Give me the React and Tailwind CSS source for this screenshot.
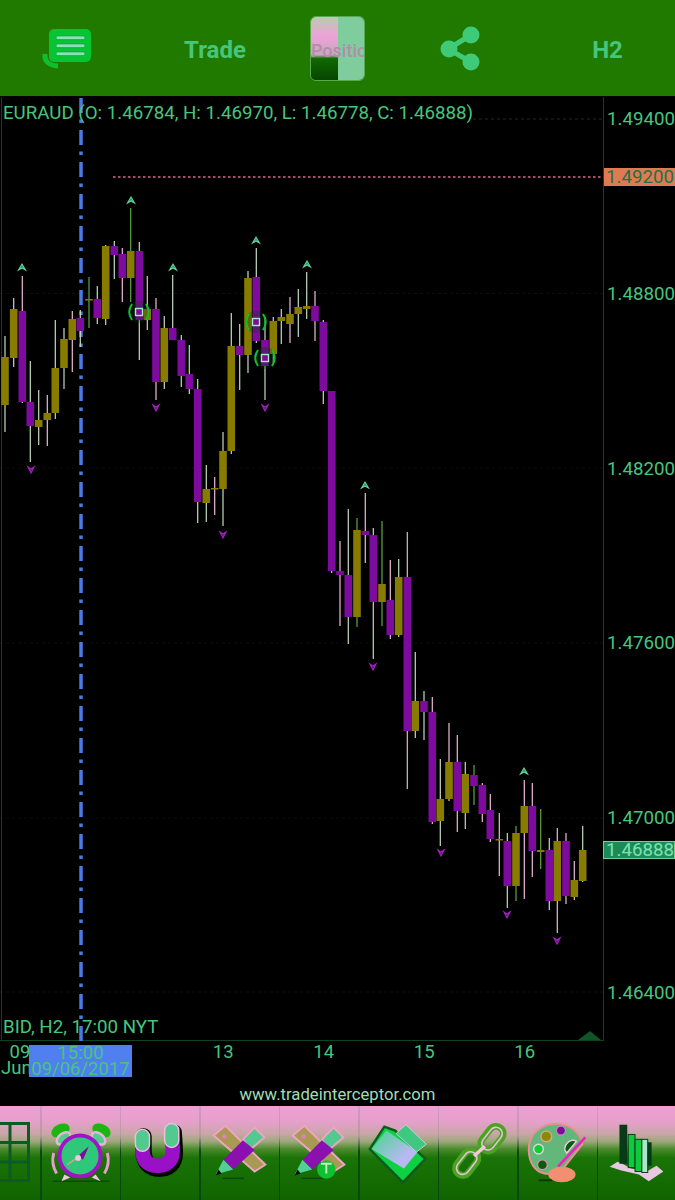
import React from "react";

// x, bodyTop, bodyBottom, wickTop, wickBottom, o=olive p=purple, optional wick colour
const PALE = "#c4dcc0";
const PINK = "#efbcd8";
const GRN = "#5fa83f";
const candles = [
  [5, 357, 405, 336, 432, "o"],
  [13.7, 309, 358, 298, 367, "o"],
  [22.3, 311, 402, 276, 403, "p", PINK],
  [30.3, 402, 426, 361, 462, "p"],
  [38.7, 420, 427, 390, 445, "o"],
  [47.3, 413, 420, 395, 446, "o", PINK],
  [55.3, 368, 413, 320, 419, "o"],
  [64, 339, 368, 328, 389, "o"],
  [72.3, 319, 340, 311, 372, "o", PINK],
  [80.3, 318, 331, 310, 347, "p"],
  [89, 299, 300.5, 277, 328, "o", GRN],
  [97.3, 299, 318, 286, 324, "p"],
  [105.7, 246, 319, 245, 325, "o", PINK],
  [114.3, 246, 255, 241, 279, "p"],
  [122.3, 254, 278, 248, 302, "p", PINK],
  [130.7, 251, 278, 208, 302, "o", GRN],
  [139.3, 251, 320, 242, 360, "p"],
  [147.3, 309, 320, 276, 330, "o", PINK],
  [156, 309, 382, 298, 400, "p", PINK],
  [164.3, 328, 382, 316, 389, "o"],
  [172.7, 328, 340, 275, 340, "p"],
  [181.3, 340, 376, 335, 387, "p"],
  [189.3, 374, 389, 345, 394, "p"],
  [197.7, 389, 502, 379, 523, "p"],
  [206.3, 489, 503, 465, 522, "o"],
  [214.7, 488, 489.5, 477, 515, "o", PINK],
  [223, 451, 489, 432, 526, "o"],
  [231.3, 346, 451, 313, 454, "o"],
  [239.7, 346, 355, 324, 390, "p"],
  [248, 278, 355, 271, 373, "o"],
  [256.3, 277, 341, 248, 343, "p"],
  [265, 340, 366, 317, 400, "p"],
  [273.3, 321, 354, 317, 363, "o"],
  [281.3, 317, 321, 309, 344, "o"],
  [290, 314, 324, 297, 343, "o", PINK],
  [298.3, 307, 314, 289, 337, "o"],
  [306.7, 306, 309, 272, 319, "o"],
  [315, 306, 321, 291, 341, "p", PINK],
  [323.3, 322, 391, 320, 404, "p"],
  [331.7, 391, 571, 391, 573, "p"],
  [340, 571, 575, 541, 626, "p", PINK],
  [348.3, 575, 617, 509, 644, "p"],
  [357, 530, 617, 518, 627, "o", GRN],
  [365.3, 531, 535, 493, 563, "p", PINK],
  [373.3, 535, 602, 528, 659, "p"],
  [382, 584, 602, 521, 626, "o", GRN],
  [390.3, 600, 635, 560, 639, "p", PINK],
  [398.7, 577, 635, 559, 637, "o"],
  [407.3, 577, 731, 532, 789, "p", "#e8b8c8"],
  [415.3, 701, 731, 652, 738, "o"],
  [424, 701, 712, 691, 740, "p"],
  [432.3, 712, 822, 697, 824, "p", PINK],
  [440.3, 799, 821, 759, 846, "o"],
  [449, 762, 799, 723, 801, "o", PINK],
  [457.3, 762, 811, 735, 832, "p", PINK],
  [465.3, 774, 813, 762, 829, "o"],
  [474, 775, 786, 765, 805, "p", GRN],
  [482.3, 785, 814, 783, 822, "p", PINK],
  [490.3, 810, 839, 794, 842, "p", PINK],
  [499.3, 839, 840.5, 813, 876, "o", PINK],
  [507.3, 841, 886, 833, 908, "p"],
  [516, 833, 886, 826, 901, "o", GRN],
  [524.3, 806, 833, 780, 899, "o", PINK],
  [532.3, 806, 851, 783, 877, "p", PINK],
  [540.7, 850, 852, 809, 869, "o", GRN],
  [549.3, 850, 901, 838, 910, "p"],
  [557.3, 841, 901, 828, 933, "o", PINK],
  [566, 841, 896, 833, 904, "p", PINK],
  [574.3, 880, 897, 861, 900, "o", PINK],
  [582.7, 850, 881, 826, 882, "o"],
];

const upMarks = [[22, 267], [131, 200], [173, 267], [256, 240], [307, 264], [365, 485], [524, 771]];
const downMarks = [[31, 470], [156, 408], [265, 408], [223, 535], [373, 667], [441, 853], [507, 915], [557, 941]];
const targets = [[139, 312], [256, 322], [265, 358]];
const prices = ["1.49400", "1.48800", "1.48200", "1.47600", "1.47000", "1.46400"];
const days = ["13", "14", "15", "16"];

const PriceChart = () => (
  <svg viewBox="0 96 604 945" className="block w-[604px] h-[945px]">
    {/* grid */}
    <path d="M473 119H603" stroke="#1c2c20" strokeDasharray="3 3" />
    {[293.5, 468, 643, 818, 992].map((y) => (
      <path key={y} d={`M0 ${y}H603`} stroke="#0b0e0b" strokeDasharray="3 3" />
    ))}
    <path d="M1.5 97V1041M603.5 97V1041M0 1040.5H604" stroke="#0f4320" fill="none" />
    <path d="M113 177H603" stroke="#e0609c" strokeWidth="1.4" strokeDasharray="2.5 2.5" />
    <path d="M578 1040L590 1031L601 1040Z" fill="#0f5528" />

    {/* time cursor */}
    <path d="M81 98V1041" stroke="#4a7ae8" strokeWidth="3.5" strokeDasharray="15 6.5 3.5 7" />

    {candles.map(([x, top, bottom, wt, wb, kind, wick]) => (
      <g key={x}>
        <path d={`M${x} ${wt}V${wb}`} stroke={wick || PALE} strokeWidth="1.2" />
        <rect
          x={x - 3.8}
          y={top}
          width="7.6"
          height={bottom - top}
          fill={kind === "o" ? "#877b00" : "#7d0c9e"}
        />
      </g>
    ))}

    {upMarks.map(([x, y]) => (
      <path key={x} d={`M${x - 3.5} ${y + 3}L${x} ${y - 3}L${x + 3.5} ${y + 3}L${x} ${y + 1}Z`} stroke="#5fd8a0" strokeWidth="1.1" fill="#2f8a60" />
    ))}
    {downMarks.map(([x, y]) => (
      <path key={x} d={`M${x - 3} ${y - 3}L${x} ${y + 3}L${x + 3} ${y - 3}L${x} ${y - 1}Z`} stroke="#a020c0" strokeWidth="1.2" fill="#60107a" />
    ))}

    {targets.map(([x, y]) => (
      <g key={x}>
        <circle cx={x} cy={y} r="11" fill="#0a3a12" opacity="0.3" />
        <path d={`M${x - 7} ${y - 8}Q${x - 12.5} ${y} ${x - 7} ${y + 8}M${x + 7} ${y - 8}Q${x + 12.5} ${y} ${x + 7} ${y + 8}`} stroke="#10c030" strokeWidth="2" fill="none" />
        <rect x={x - 3.5} y={y - 3.5} width="7" height="7" fill="#7d0c9e" stroke="#a8e8c0" strokeWidth="1.4" />
      </g>
    ))}
  </svg>
);

const GREEN_TEXT = "text-[#46c67c]";

const MenuIcon = () => (
  <svg viewBox="40 26 54 46" className="w-[54px] h-[46px]">
    <path d="M44 55Q43 66 57 67" stroke="#0cc030" strokeWidth="5" fill="none" />
    <rect x="48" y="30" width="42" height="33" rx="5" fill="#06c533" />
    {[37, 45, 53].map((y) => (
      <rect key={y} x="55" y={y} width="29" height="3.6" rx="1.8" fill="#8ae0b8" stroke="#0a9a2c" strokeWidth="0.6" />
    ))}
  </svg>
);

const ShareIcon = () => (
  <svg viewBox="438 24 44 50" className="w-[44px] h-[50px]">
    <path d="M471 36L448 50L471 63" stroke="#3fca78" strokeWidth="5" fill="none" />
    <circle cx="471" cy="36" r="8.5" fill="#3fca78" />
    <circle cx="449" cy="50" r="8.5" fill="#3fca78" />
    <circle cx="471" cy="63" r="8.5" fill="#3fca78" />
  </svg>
);

const GridIcon = () => (
  <svg viewBox="0 0 41 94" className="w-[41px] h-[94px]">
    <path d="M0 17.5H29M0 36.5H29M0 56H29M0 74.5H29M10 17V75M28.5 16V76" stroke="#0d5a28" strokeWidth="3" fill="none" />
  </svg>
);

const AlarmIcon = () => (
  <svg viewBox="0 0 80 94" className="w-[80px] h-[94px]">
    <path d="M11 76H69" stroke="#0a4a10" strokeWidth="1.6" />
    <ellipse cx="19" cy="24" rx="10" ry="6.5" transform="rotate(-25 19 24)" fill="#1db512" />
    <ellipse cx="61" cy="24" rx="10" ry="6.5" transform="rotate(25 61 24)" fill="#1db512" />
    <ellipse cx="22" cy="32" rx="8" ry="5" transform="rotate(-40 22 32)" fill="#50d090" stroke="#ecb4dc" strokeWidth="2.5" />
    <ellipse cx="58" cy="32" rx="8" ry="5" transform="rotate(40 58 32)" fill="#50d090" stroke="#ecb4dc" strokeWidth="2.5" />
    <path d="M12 47Q9 58 15 68M67 47Q70 58 64 68" stroke="#e89cd0" strokeWidth="3" fill="none" />
    <path d="M23 69L20 76L29 72ZM55 69L60 76L51 72Z" fill="#f0c8e0" />
    <circle cx="39" cy="50" r="21" fill="#2fc87a" stroke="#a412c8" strokeWidth="4" />
    <path d="M37 50L48 40L42 54Z" fill="#7d0c9e" />
    <path d="M39 50L26 59" stroke="#d8a090" strokeWidth="1.5" />
    <circle cx="37" cy="52" r="3" fill="#f0c8e0" />
  </svg>
);

const MagnetIcon = () => (
  <svg viewBox="0 0 80 94" className="w-[80px] h-[94px]">
    <path d="M23 30V45Q24 64 41 63Q57 62 55 42L54 26" stroke="#050505" strokeWidth="17" strokeLinecap="round" fill="none" />
    <path d="M22 30V45Q23 61 39 60Q54 59 53 42L52 24" stroke="#9a10c8" strokeWidth="15" strokeLinecap="round" fill="none" />
    <path d="M22 38V30M52 34L52 24" stroke="#ecbfe0" strokeWidth="16" strokeLinecap="round" />
    <path d="M22 38V30M52 34L52 24" stroke="#52c98f" strokeWidth="13" strokeLinecap="round" />
  </svg>
);

const ToolsIcon = ({ badge }) => (
  <svg viewBox="0 0 80 94" className="w-[80px] h-[94px]">
    <path d="M22 73H44" stroke="#0a4a10" strokeWidth="1.6" />
    <path d="M13 29L25 19L66 59L55 66Z" fill="#a89a52" stroke="#f2a2c4" strokeWidth="2" />
    <circle cx="24" cy="30" r="2.5" fill="#e080b0" />
    <path d="M43 33L55 21L65 31L50 44Z" fill="#52c98f" stroke="#f2a2c4" strokeWidth="2" />
    <path d="M23 54L43 34L55 44L33 64Z" fill="#8a10b0" />
    <path d="M23 54L15 69L33 64Z" fill="#52d094" />
    <path d="M18 64L15 70L21 68Z" fill="#050505" />
    {badge && (
      <g>
        <circle cx="47.5" cy="64" r="9.5" fill="#10c030" />
        <path d="M42 58H53M47.5 58V68" stroke="#c8e8c8" strokeWidth="2" />
      </g>
    )}
  </svg>
);

const FolderIcon = () => (
  <svg viewBox="0 0 80 94" className="w-[80px] h-[94px]">
    <defs>
      <linearGradient id="folderFront" x1="0" y1="0" x2="1" y2="1">
        <stop offset="0" stopColor="#3fd888" />
        <stop offset="0.7" stopColor="#b8b8f2" />
      </linearGradient>
    </defs>
    <path d="M10 43L25 20L36 24L67 53L44 77Z" fill="#0ed040" stroke="#0a5a20" strokeWidth="2.5" />
    <path d="M12 43L27 24L59 46L45 63Z" fill="url(#folderFront)" />
    <path d="M37 27L47 18L68 38L58 46Z" fill="#3fc880" stroke="#d0c8e0" strokeWidth="1" />
  </svg>
);

const LinkIcon = () => (
  <svg viewBox="0 0 80 94" className="w-[80px] h-[94px]">
    <rect x="40" y="25" width="28" height="15" rx="7.5" transform="rotate(-52 54 32)" fill="none" stroke="#4ba322" strokeWidth="7" />
    <rect x="41" y="26" width="26" height="13" rx="6.5" transform="rotate(-52 54 32)" fill="none" stroke="#e8c0d8" strokeWidth="1.6" />
    <rect x="14" y="50" width="28" height="15" rx="7.5" transform="rotate(-52 28 57)" fill="none" stroke="#4ba322" strokeWidth="7" />
    <rect x="15" y="51" width="26" height="13" rx="6.5" transform="rotate(-52 28 57)" fill="none" stroke="#e8c0d8" strokeWidth="1.6" />
    <path d="M47 40L36 50" stroke="#f0c8dc" strokeWidth="3.4" />
  </svg>
);

const PaletteIcon = () => (
  <svg viewBox="0 0 80 94" className="w-[80px] h-[94px]">
    <path d="M10 44C10 26 24 16 40 17C54 18 64 28 65 38L46 62C40 68 34 69 26 68C16 66 10 56 10 44Z" fill="#62b87a" stroke="#f08c94" strokeWidth="2" />
    <circle cx="28" cy="30" r="5.5" fill="#8a8a00" stroke="#e8a090" strokeWidth="1.4" />
    <circle cx="43" cy="24" r="4.5" fill="#7d0c9e" stroke="#d890c0" strokeWidth="1" />
    <circle cx="20" cy="43" r="5" fill="#10d030" stroke="#e8d0e8" strokeWidth="1.4" />
    <circle cx="24" cy="59" r="5" fill="#0a5a10" stroke="#e090a0" strokeWidth="1.2" />
    <path d="M47 44C47 36 54 32 59 35L49 47Z" fill="#0a5a10" stroke="#f0d0d8" strokeWidth="1.4" />
    <path d="M68 31L40 61" stroke="#f020c0" strokeWidth="2.6" />
    <ellipse cx="44" cy="69" rx="14" ry="8" fill="#f09070" />
    <path d="M20 75H34" stroke="#0a3a10" strokeWidth="2" />
  </svg>
);

const BarsIcon = () => (
  <svg viewBox="0 0 80 94" className="w-[80px] h-[94px]">
    <path d="M12 61L20 56L25 58L34 63L50 66L60 60L67 66L52 76L42 69L24 65Z" fill="#e8c8e0" />
    <rect x="22" y="18" width="8" height="40" fill="#083a18" />
    <rect x="31" y="28" width="7" height="34" fill="#0ecb3c" stroke="#083a18" />
    <rect x="38" y="33" width="7" height="33" fill="#0ecb3c" stroke="#083a18" />
    <rect x="45" y="33" width="6" height="34" fill="#a8e8c8" stroke="#083a18" />
    <path d="M51 36H55V60H51Z" fill="#083a18" />
  </svg>
);

const tools = [
  <AlarmIcon key="alarm" />,
  <MagnetIcon key="magnet" />,
  <ToolsIcon key="tools" />,
  <ToolsIcon key="tools-badge" badge />,
  <FolderIcon key="folder" />,
  <LinkIcon key="link" />,
  <PaletteIcon key="palette" />,
  <BarsIcon key="bars" />,
];

const Separator = () => (
  <div className="w-[1.5px] shrink-0 bg-[linear-gradient(#dc94c4,#b49a9c_32%,#0a4a10_48%,#0a4a10)]" />
);

const App = () => {
  return (
    <div className="w-[675px] h-[1200px] flex flex-col bg-black overflow-hidden font-[Roboto,sans-serif]">
      {/* Header */}
      <header className="h-[96px] flex items-center bg-[#207a00]">
        <div className="w-[135px] flex justify-center"><MenuIcon /></div>
        <div className={`w-[160px] pt-[3px] text-center text-[24px] font-bold ${GREEN_TEXT}`}>Trade</div>
        <div className="w-[85px] flex justify-center">
          <button className="relative w-[55px] h-[65px] flex rounded-md overflow-hidden border border-[#5aa850]">
            <span className="w-[27px] h-full bg-[linear-gradient(#b8ccb0,#eea2d8_30%,#c8a8b8_60%,#0f6a00_66%,#084400)]" />
            <span className="flex-1 h-full bg-[#7fcd9c]" />
            <span className="absolute left-0 top-[24px] text-[18px] font-medium leading-[20px] whitespace-nowrap text-[#b48cae]">Position</span>
          </button>
        </div>
        <div className="w-[160px] flex justify-center"><ShareIcon /></div>
        <div className={`flex-1 pt-[3px] text-center text-[24px] font-bold ${GREEN_TEXT}`}>H2</div>
      </header>

      {/* Chart + price axis */}
      <section className="relative h-[945px] flex">
        <div className="relative w-[604px]">
          <PriceChart />
          <div className={`absolute left-[3px] top-[6px] text-[18.7px] leading-[22px] whitespace-nowrap ${GREEN_TEXT}`}>
            EURAUD (O: 1.46784, H: 1.46970, L: 1.46778, C: 1.46888)
          </div>
          <div className={`absolute left-[3px] top-[920px] text-[18.7px] leading-[22px] whitespace-nowrap ${GREEN_TEXT}`}>
            BID, H2, 17:00 NYT
          </div>
        </div>
        <div className={`flex-1 flex flex-col gap-[152.8px] pl-[3px] pt-[12px] text-[18.7px] leading-[22px] ${GREEN_TEXT}`}>
          {prices.map((p) => <div key={p}>{p}</div>)}
        </div>
        <div className="absolute left-[604px] top-[72px] w-[71px] h-[18px] bg-[#e07a50] text-[#1f7050] text-[18.7px] leading-[18px] pl-[2px]">1.49200</div>
        <div className="absolute left-[603px] top-[745px] w-[72px] h-[18px] bg-[#1c8a58] border border-[#6fd0a0] text-[#7fe0b0] text-[18.7px] leading-[16px] pl-[2px]">1.46888</div>
      </section>

      {/* Time axis */}
      <section className={`relative h-[65px] text-[18.5px] leading-[20px] ${GREEN_TEXT}`}>
        <div className="flex pt-[1px]">
          <div className="w-[40px] text-center">09</div>
          <div className="w-[133px]" />
          {days.map((d) => (
            <div key={d} className="w-[100.5px] text-center">{d}</div>
          ))}
        </div>
        <div className="pl-[1px] -mt-[4px]">Jun</div>
        <div className="absolute left-[29px] top-[4px] w-[103px] h-[32px] bg-[#5080f0] text-center leading-[16px]">
          <div>15:00</div>
          <div>09/06/2017</div>
        </div>
        <div className="mt-[7px] text-center text-[16.7px] leading-[20px] text-[#a0dcb4]">www.tradeinterceptor.com</div>
      </section>

      {/* Toolbar */}
      <nav className="h-[94px] flex bg-[linear-gradient(#ee9fd4,#e6a0cc_16%,#c8a6a6_30%,#9aa878_38%,#4a8a2c_46%,#1a7406_55%,#0f6400)]">
        <div className="w-[40px] shrink-0"><GridIcon /></div>
        <Separator />
        {tools.map((icon) => (
          <React.Fragment key={icon.key}>
            <div className="w-[78px] shrink-0 flex justify-center">{icon}</div>
            <Separator />
          </React.Fragment>
        ))}
      </nav>
    </div>
  );
};

export default App;
